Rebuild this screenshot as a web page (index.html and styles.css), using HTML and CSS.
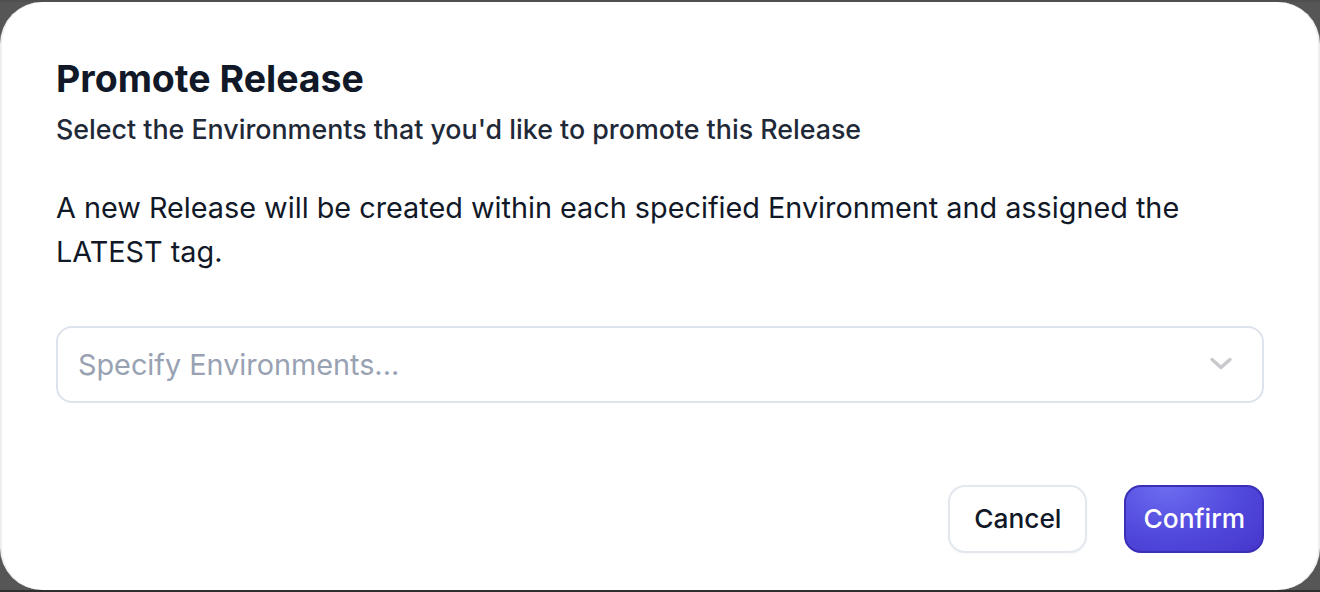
FILE: index.html
```html
<!DOCTYPE html>
<html lang="en">
<head>
<meta charset="utf-8">
<title>Promote Release</title>
<link rel="stylesheet" href="styles.css">
</head>
<body>
<div class="backdrop">
  <div class="modal" role="dialog" aria-labelledby="modal-title">
    <header class="modal-header">
      <h2 id="modal-title" class="modal-title">Promote Release</h2>
      <p class="modal-subtitle">Select the Environments that you'd like to promote this Release</p>
    </header>
    <p class="modal-body-text">A new Release will be created within each specified Environment and assigned the LATEST tag.</p>
    <div class="select">
      <span class="select-placeholder">Specify Environments...</span>
      <svg class="select-chevron" width="24" height="16" viewBox="0 0 24 16" aria-hidden="true">
        <path d="M3 3.5 L12 11.5 L21 3.5" fill="none" stroke="#c8c9cc" stroke-width="3.4" stroke-linecap="round" stroke-linejoin="round"/>
      </svg>
    </div>
    <footer class="modal-footer">
      <button class="btn btn-secondary" type="button">Cancel</button>
      <button class="btn btn-primary" type="button">Confirm</button>
    </footer>
  </div>
</div>
</body>
</html>
```

FILE: styles.css
```css
* {
  box-sizing: border-box;
}

html, body {
  margin: 0;
  padding: 0;
}

body {
  width: 1320px;
  height: 592px;
  overflow: hidden;
  background: #2f2f2f;
  font-family: Inter, "Noto Sans", "Liberation Sans", sans-serif;
  color: #111827;
}

.backdrop {
  height: 590px;
  background: #565656;
  border-top: 2px solid #4f4f4f;
}

.modal {
  height: 588px;
  background: #ffffff;
  border-radius: 42px;
  border-left: 2px solid #efefef;
  border-right: 2px solid #efefef;
  padding: 54px 54px 0 54px;
  display: flex;
  flex-direction: column;
}

.modal-header {
  display: flex;
  flex-direction: column;
}

.modal-title {
  margin: 0;
  font-size: 37.5px;
  line-height: 46px;
  font-weight: 700;
  color: #111827;
}

.modal-subtitle {
  margin: 9px 0 0 0;
  font-size: 26.8px;
  line-height: 36px;
  font-weight: 500;
  color: #1f2937;
}

.modal-body-text {
  margin: 38.6px 0 0 0;
  font-size: 28.8px;
  line-height: 44.8px;
  font-weight: 400;
  color: #111827;
}

.select {
  margin-top: 50.8px;
  height: 77px;
  border: 2px solid #dde3ec;
  border-radius: 16px;
  display: flex;
  align-items: center;
  justify-content: space-between;
  padding: 0 29px 0 20px;
}

.select-placeholder {
  font-size: 28.8px;
  color: #98a2b3;
}

.select-chevron {
  display: block;
}

.modal-footer {
  margin-top: 82px;
  display: flex;
  justify-content: flex-end;
  gap: 37px;
}

.btn {
  height: 68px;
  border-radius: 17px;
  font-family: Inter, "Noto Sans", "Liberation Sans", sans-serif;
  font-size: 26.3px;
  font-weight: 500;
  cursor: pointer;
}

.btn-secondary {
  background: #ffffff;
  color: #111827;
  border: 2px solid #e3e8ef;
  padding: 0 24px;
  box-shadow: 0 1px 3px rgba(0, 0, 0, 0.04);
}

.btn-primary {
  background: radial-gradient(ellipse at 30% 0%, #6d6cf0 0%, #5148dc 55%, #4636cc 100%);
  color: #ffffff;
  border: 2px solid #3b2fb8;
  padding: 0 17px;
}
```
